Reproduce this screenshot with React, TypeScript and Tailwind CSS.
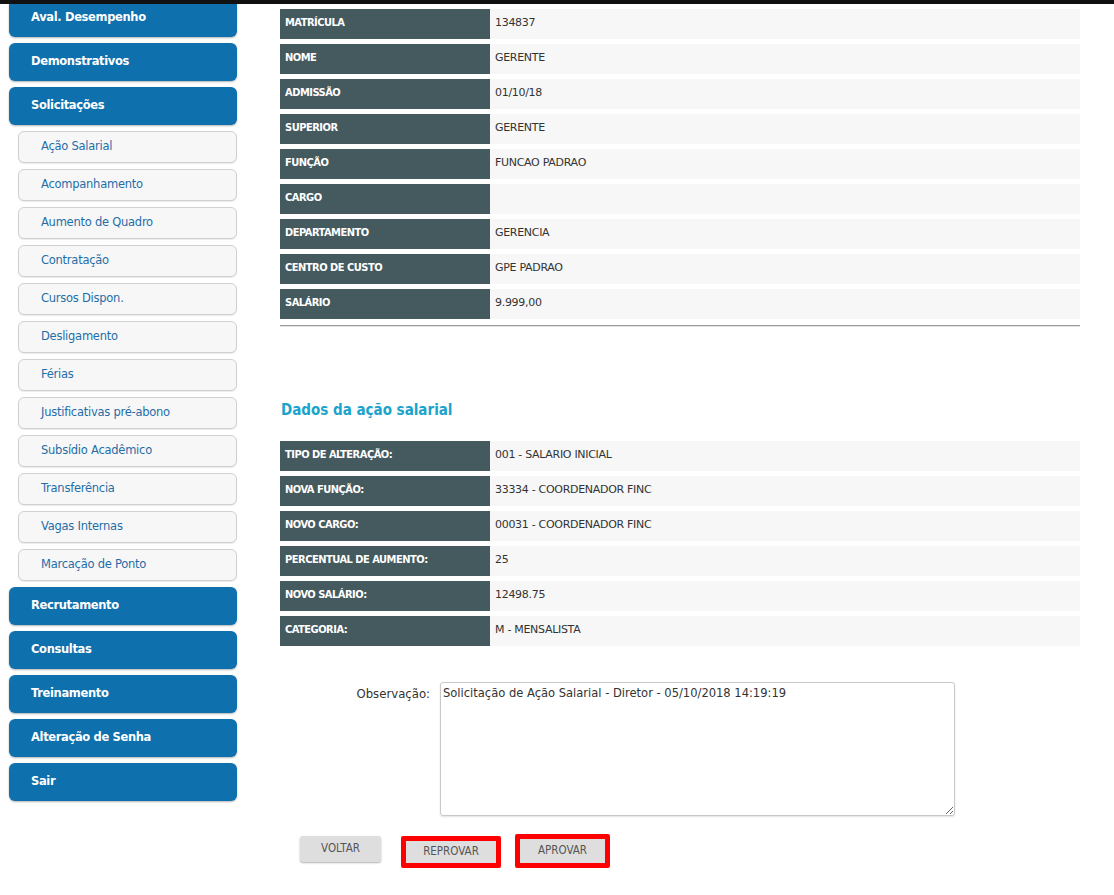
import React from "react";

const mainMenuTop = ["Aval. Desempenho", "Demonstrativos", "Solicitações"];
const subMenu = [
  "Ação Salarial",
  "Acompanhamento",
  "Aumento de Quadro",
  "Contratação",
  "Cursos Dispon.",
  "Desligamento",
  "Férias",
  "Justificativas pré-abono",
  "Subsídio Acadêmico",
  "Transferência",
  "Vagas Internas",
  "Marcação de Ponto",
];
const mainMenuBottom = ["Recrutamento", "Consultas", "Treinamento", "Alteração de Senha", "Sair"];

const employee: [string, string][] = [
  ["MATRÍCULA", "134837"],
  ["NOME", "GERENTE"],
  ["ADMISSÃO", "01/10/18"],
  ["SUPERIOR", "GERENTE"],
  ["FUNÇÃO", "FUNCAO PADRAO"],
  ["CARGO", ""],
  ["DEPARTAMENTO", "GERENCIA"],
  ["CENTRO DE CUSTO", "GPE PADRAO"],
  ["SALÁRIO", "9.999,00"],
];

const acao: [string, string][] = [
  ["TIPO DE ALTERAÇÃO:", "001 - SALARIO INICIAL"],
  ["NOVA FUNÇÃO:", "33334 - COORDENADOR FINC"],
  ["NOVO CARGO:", "00031 - COORDENADOR FINC"],
  ["PERCENTUAL DE AUMENTO:", "25"],
  ["NOVO SALÁRIO:", "12498.75"],
  ["CATEGORIA:", "M - MENSALISTA"],
];

const condensed = { fontFamily: '"DejaVu Sans Condensed", "DejaVu Sans", sans-serif' };

function MainItem({ label }: { label: string }) {
  return (
    <div className="h-[38px] w-[228px] flex items-center pl-[22px] rounded-[6px] bg-[#0e70ad] text-white text-[11.5px] tracking-[-0.35px] font-bold shadow-[0_1px_2px_rgba(0,0,0,0.3)]">
      {label}
    </div>
  );
}

function SubItem({ label }: { label: string }) {
  return (
    <div className="ml-[9px] h-[32px] w-[219px] flex items-center pl-[22px] rounded-[6px] bg-[#f7f7f7] border border-[#d0d0d0] text-[#1f6ea8] text-[11.5px] tracking-[-0.25px] shadow-[0_1px_1px_rgba(0,0,0,0.08)]">
      {label}
    </div>
  );
}

function DataTable({ rows }: { rows: [string, string][] }) {
  return (
    <div className="flex flex-col gap-[5px]">
      {rows.map(([k, v]) => (
        <div key={k} className="flex h-[30px] text-[11px]">
          <div
            className="w-[210px] flex items-center px-[5px] pb-[1px] bg-[#455a5f] text-white font-bold tracking-[-0.5px]"
            style={condensed}
          >
            {k}
          </div>
          <div className="flex-1 flex items-center px-[5px] pb-[1px] bg-[#f7f7f7] text-[#333] tracking-[-0.3px]">{v}</div>
        </div>
      ))}
    </div>
  );
}

export default function App() {
  return (
    <div className="relative min-h-[895px] bg-white" style={{ fontFamily: '"DejaVu Sans", Verdana, sans-serif' }}>
      <div className="fixed top-0 inset-x-0 h-[4px] bg-[#111] z-10" />
      <div className="flex items-start">
        {/* Sidebar */}
        <div className="-mt-[1px] pl-[9px] w-[238px] flex flex-col gap-[6px]">
          {mainMenuTop.map((m) => (
            <MainItem key={m} label={m} />
          ))}
          {subMenu.map((s) => (
            <SubItem key={s} label={s} />
          ))}
          {mainMenuBottom.map((m) => (
            <MainItem key={m} label={m} />
          ))}
        </div>

        {/* Main */}
        <div className="ml-[42px] w-[800px] pt-[9px]">
          <DataTable rows={employee} />
          <div className="mt-[6px] border-t border-[#9a9a9a] border-b border-b-[#e4e4e4]" />

          <h2
            className="mt-[73px] h-[20px] leading-[20px] text-[15px] font-bold text-[#1aa3cb] pl-[1px]"
            style={condensed}
          >
            Dados da ação salarial
          </h2>

          <div className="mt-[21px]">
            <DataTable rows={acao} />
          </div>

          <div className="mt-[36px] flex items-start">
            <label className="w-[150px] text-right text-[13px] text-[#333] pt-[2px]" style={condensed}>
              Observação:
            </label>
            <textarea
              className="ml-[10px] w-[515px] h-[134px] border border-[#c8c8c8] rounded-[3px] px-[2px] py-[2px] text-[12.8px] text-[#333] leading-[16px] shadow-[0_1px_2px_rgba(0,0,0,0.12)] outline-none"
              style={condensed}
              defaultValue="Solicitação de Ação Salarial - Diretor - 05/10/2018 14:19:19"
            />
          </div>

          <div className="mt-[18px] flex items-start text-[11.5px] text-[#555]" style={condensed}>
            <button className="ml-[20px] mt-[2px] w-[81px] h-[26px] rounded-[3px] bg-[#dedede] shadow-[0_1px_2px_rgba(0,0,0,0.3)]">
              VOLTAR
            </button>
            <div className="ml-[20px] mt-[2px] w-[100px] h-[32px] border-[5px] border-[#ff0000] rounded-[2px] bg-[#dedede] flex items-center justify-center">
              REPROVAR
            </div>
            <div className="ml-[14px] w-[95px] h-[34px] border-[5px] border-[#ff0000] rounded-[2px] bg-[#dedede] flex items-center justify-center">
              APROVAR
            </div>
          </div>
        </div>
      </div>
    </div>
  );
}
